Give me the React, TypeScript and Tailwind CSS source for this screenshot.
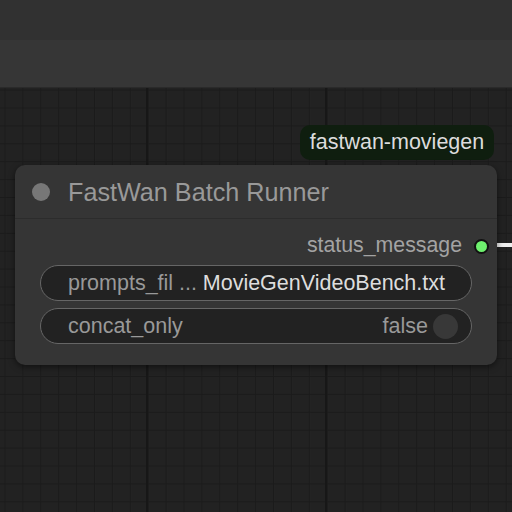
const font = { fontFamily: '"Liberation Sans", Arial, sans-serif' };

const Grid = () => (
  <svg className="absolute inset-0" width="512" height="424">
    <defs>
      <pattern id="minor" x="4.5" y="1.6" width="17.9" height="17.9" patternUnits="userSpaceOnUse">
        <path d="M0 0H17.9M0 0V17.9" stroke="#1b1b1b" strokeWidth="2" fill="none" />
      </pattern>
    </defs>
    <rect width="512" height="424" fill="url(#minor)" />
    <line x1="147" y1="0" x2="147" y2="424" stroke="#171717" strokeWidth="2" />
    <line x1="326" y1="0" x2="326" y2="424" stroke="#171717" strokeWidth="2" />
  </svg>
);

const App = () => {
  return (
    <div className="w-[512px] h-[512px] flex flex-col overflow-hidden bg-[#222]" style={font}>
      <div className="h-10 bg-[#313131]" />
      <div className="h-12 bg-[#363636] border-b border-[#2a2a2a]" />
      <div className="relative flex-1 bg-[#222]">
        <Grid />

        <div className="absolute left-[300px] top-[37px] w-[194px] h-[35px] rounded-[10px] bg-[#0f1e0f] flex items-center justify-center text-[21.5px] text-[#dcdcdc]">
          fastwan-moviegen
        </div>

        <div className="absolute left-[497px] top-[155px] w-[20px] h-[4px] bg-[#eee]" />

        <div className="absolute left-[15px] top-[77px] w-[482px] rounded-[10px] bg-[#353535] shadow-[0_2px_6px_rgba(0,0,0,0.5)] flex flex-col">
          <div className="h-[54px] flex items-center pl-[17px] gap-[18px] border-b border-[#2c2c2c]">
            <div className="w-[18px] h-[18px] rounded-full bg-[#777]" />
            <span className="mt-[3px] text-[25.2px] text-[#999]">FastWan Batch Runner</span>
          </div>
          <div className="flex flex-col pt-[14px] pb-[21px]">
            <div className="h-[26px] flex items-center justify-end pr-[8px] gap-[12px]">
              <span className="text-[21.3px] text-[#a3a3a3]">status_message</span>
              <div className="w-[15px] h-[15px] rounded-full bg-[#6ef06e] border-2 border-[#111]" />
            </div>
            <div className="mt-[6px] mx-[25px] flex flex-col gap-[7px]">
              <div className="h-[36px] rounded-full bg-[#222] border border-[#666] flex items-center pl-[27px] pr-[26px] text-[21.5px]">
                <span className="text-[#999]">prompts_fil ...</span>
                <span className="ml-auto text-[#ddd]">MovieGenVideoBench.txt</span>
              </div>
              <div className="h-[36px] rounded-full bg-[#222] border border-[#666] flex items-center pl-[27px] pr-[13px] text-[21.5px]">
                <span className="text-[#999]">concat_only</span>
                <span className="ml-auto text-[#999]">false</span>
                <div className="ml-[5px] w-[25px] h-[25px] rounded-full bg-[#383838]" />
              </div>
            </div>
          </div>
        </div>
      </div>
    </div>
  );
};

export default App;
